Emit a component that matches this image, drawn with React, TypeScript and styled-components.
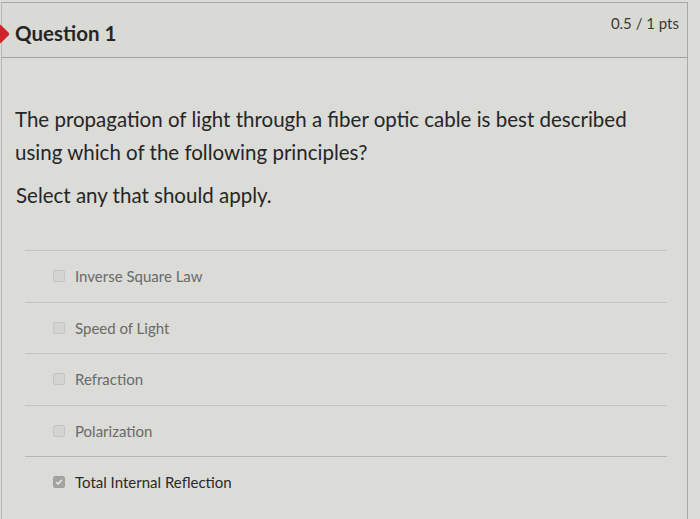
import React from "react";
import styled, { createGlobalStyle } from "styled-components";

const GlobalStyle = createGlobalStyle`
  html, body {
    margin: 0;
    padding: 0;
    background: #dbdbd7;
  }
  body {
    font-family: Lato, "Open Sans", sans-serif;
    color: #2d3b45;
  }
`;

const Page = styled.div`
  width: 700px;
  height: 519px;
  overflow: hidden;
  background: #dbdbd7;
  padding: 2px 0 0 1px;
  box-sizing: border-box;
`;

const Card = styled.div`
  width: 687px;
  height: 517px;
  box-sizing: border-box;
  border-top: 1px solid #a9a9a5;
  border-right: 1px solid #a9a9a5;
  border-left: 1px solid #b8b8b4;
  position: relative;
`;

const Header = styled.div`
  height: 55px;
  box-sizing: border-box;
  border-bottom: 1px solid #a4a4a0;
  display: flex;
  justify-content: space-between;
  align-items: flex-start;
  padding: 0 8px 0 13px;
  background: #d9d9d5;
`;

const Marker = styled.span`
  position: absolute;
  left: -9px;
  top: 24px;
  width: 14px;
  height: 14px;
  background: #d2232a;
  transform: rotate(45deg);
  border-radius: 2px;
`;

const Title = styled.h2`
  margin: 18px 0 0;
  font-size: 20.5px;
  font-weight: 700;
  color: #262626;
`;

const Points = styled.div`
  margin: 11px 0 0;
  font-size: 15px;
  color: #3a3a3a;
`;

const Body = styled.div`
  padding: 45px 0 0 13px;
`;

const Question = styled.p`
  margin: 0;
  font-size: 20.5px;
  line-height: 33px;
  color: #262626;
  width: 650px;
`;

const Hint = styled.p`
  margin: 10px 0 0 1px;
  font-size: 20.5px;
  line-height: 33px;
  color: #262626;
`;

const Answers = styled.ul`
  list-style: none;
  margin: 38px 0 0 10px;
  padding: 0;
  width: 642px;
`;

const Answer = styled.li<{ $selected?: boolean }>`
  height: 51.5px;
  box-sizing: border-box;
  border-top: 1px solid ${(p) => (p.$selected ? "#b6b6b2" : "#c4c4c0")};
  display: flex;
  align-items: center;
  padding-left: 28px;
  gap: 10px;
  font-size: 15px;
  color: ${(p) => (p.$selected ? "#2a2a2a" : "#6a6a68")};
`;

const Box = styled.span<{ $checked?: boolean }>`
  width: 12px;
  height: 12px;
  box-sizing: border-box;
  border-radius: 2px;
  border: 1px solid ${(p) => (p.$checked ? "#9e9e9b" : "#c4c4c0")};
  background: ${(p) => (p.$checked ? "#a3a3a0" : "#d4d4d0")};
  display: inline-flex;
  align-items: center;
  justify-content: center;
`;

const answers = [
  { label: "Inverse Square Law", checked: false },
  { label: "Speed of Light", checked: false },
  { label: "Refraction", checked: false },
  { label: "Polarization", checked: false },
  { label: "Total Internal Reflection", checked: true },
];

export default function App() {
  return (
    <>
      <GlobalStyle />
      <Page>
        <Card>
          <Marker />
          <Header>
            <Title>Question 1</Title>
            <Points>0.5 / 1 pts</Points>
          </Header>
          <Body>
            <Question>
              The propagation of light through a fiber optic cable is best
              described using which of the following principles?
            </Question>
            <Hint>Select any that should apply.</Hint>
            <Answers>
              {answers.map((a) => (
                <Answer key={a.label} $selected={a.checked}>
                  <Box $checked={a.checked}>
                    {a.checked && (
                      <svg width="8" height="8" viewBox="0 0 8 8">
                        <path
                          d="M1.2 4.2 L3.2 6 L6.8 1.8"
                          fill="none"
                          stroke="#eeeeec"
                          strokeWidth="1.4"
                        />
                      </svg>
                    )}
                  </Box>
                  {a.label}
                </Answer>
              ))}
            </Answers>
          </Body>
        </Card>
      </Page>
    </>
  );
}
